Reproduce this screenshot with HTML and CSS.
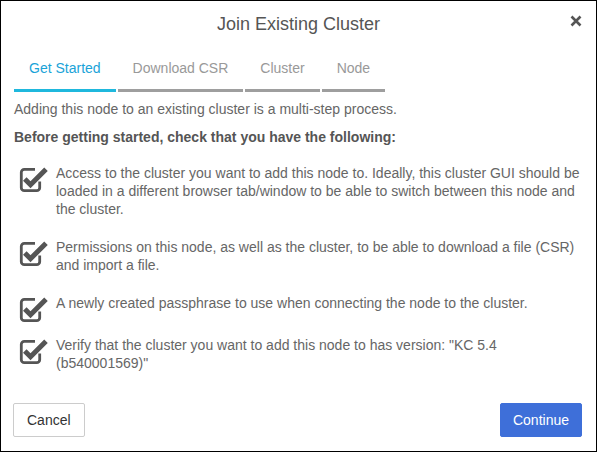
FILE: index.html
```html
<!DOCTYPE html>
<html lang="en">
<head>
<meta charset="utf-8">
<title>Join Existing Cluster</title>
<link rel="stylesheet" href="styles.css">
</head>
<body>
<div class="dialog">
  <header class="dialog-header">
    <span></span>
    <h1 class="dialog-title">Join Existing Cluster</h1>
    <button class="close-btn" aria-label="Close">
      <svg width="12" height="12" viewBox="0 0 12 12"><path d="M1.5 1.5 L10.5 10.5 M10.5 1.5 L1.5 10.5" stroke="#555" stroke-width="2.6" stroke-linecap="butt"/></svg>
    </button>
  </header>

  <nav class="tabs">
    <div class="tab active">Get Started</div>
    <div class="tab">Download CSR</div>
    <div class="tab">Cluster</div>
    <div class="tab">Node</div>
  </nav>

  <main class="dialog-body">
    <p class="intro">Adding this node to an existing cluster is a multi-step process.</p>
    <p class="lead">Before getting started, check that you have the following:</p>
    <ul class="checklist">
      <li class="item">
        <svg class="check" width="31" height="26" viewBox="0 0 31 26"><path d="M17 2.3 H6.3 a3 3 0 0 0 -3 3 V20.7 a3 3 0 0 0 3 3 H18.7 a3 3 0 0 0 3 -3 V14.5" fill="none" stroke="#555" stroke-width="2.8"/><path d="M6.8 12 L12.5 17.7 L28 2.2" fill="none" stroke="#555" stroke-width="5"/></svg>
        <span>Access to the cluster you want to add this node to. Ideally, this cluster GUI should be loaded in a different browser tab/window to be able to switch between this node and the cluster.</span>
      </li>
      <li class="item">
        <svg class="check" width="31" height="26" viewBox="0 0 31 26"><path d="M17 2.3 H6.3 a3 3 0 0 0 -3 3 V20.7 a3 3 0 0 0 3 3 H18.7 a3 3 0 0 0 3 -3 V14.5" fill="none" stroke="#555" stroke-width="2.8"/><path d="M6.8 12 L12.5 17.7 L28 2.2" fill="none" stroke="#555" stroke-width="5"/></svg>
        <span>Permissions on this node, as well as the cluster, to be able to download a file (CSR) and import a file.</span>
      </li>
      <li class="item">
        <svg class="check" width="31" height="26" viewBox="0 0 31 26"><path d="M17 2.3 H6.3 a3 3 0 0 0 -3 3 V20.7 a3 3 0 0 0 3 3 H18.7 a3 3 0 0 0 3 -3 V14.5" fill="none" stroke="#555" stroke-width="2.8"/><path d="M6.8 12 L12.5 17.7 L28 2.2" fill="none" stroke="#555" stroke-width="5"/></svg>
        <span>A newly created passphrase to use when connecting the node to the cluster.</span>
      </li>
      <li class="item">
        <svg class="check" width="31" height="26" viewBox="0 0 31 26"><path d="M17 2.3 H6.3 a3 3 0 0 0 -3 3 V20.7 a3 3 0 0 0 3 3 H18.7 a3 3 0 0 0 3 -3 V14.5" fill="none" stroke="#555" stroke-width="2.8"/><path d="M6.8 12 L12.5 17.7 L28 2.2" fill="none" stroke="#555" stroke-width="5"/></svg>
        <span>Verify that the cluster you want to add this node to has version: "KC 5.4 (b540001569)"</span>
      </li>
    </ul>
  </main>

  <footer class="dialog-footer">
    <button class="btn btn-default">Cancel</button>
    <button class="btn btn-primary">Continue</button>
  </footer>
</div>
</body>
</html>
```

FILE: styles.css
```css
* { box-sizing: border-box; }

html, body {
  margin: 0;
  padding: 0;
  background: #fff;
}

body {
  font-family: "Liberation Sans", Arial, sans-serif;
  font-size: 14px;
  color: #666;
}

.dialog {
  width: 597px;
  height: 452px;
  border: 1px solid #000;
  background: #fff;
  display: flex;
  flex-direction: column;
}

.dialog-header {
  display: grid;
  grid-template-columns: 1fr auto 1fr;
  align-items: center;
  height: 44px;
  padding: 0 14px 0 14px;
}

.dialog-title {
  margin: 0;
  font-size: 18px;
  font-weight: normal;
  color: #555;
  line-height: 22px;
  padding-top: 1px;
}

.close-btn {
  justify-self: end;
  border: 0;
  background: none;
  padding: 0;
  width: 12px;
  height: 12px;
  display: flex;
  margin-top: -4px;
}

.tabs {
  display: flex;
  gap: 2px;
  margin: 15px 13px 0 13px;
}

.tab {
  padding: 0 15px 13px 15px;
  line-height: 16px;
  color: #999;
  border-bottom: 3px solid #9e9e9e;
}

.tab.active {
  color: #1aa3d8;
  border-bottom-color: #1fb8dd;
}

.dialog-body {
  flex: 1;
  padding: 0 13px;
}

.intro {
  margin: 9px 0 0 0;
  line-height: 17px;
  color: #666;
}

.lead {
  margin: 11px 0 0 0;
  line-height: 17px;
  font-weight: bold;
  color: #555;
}

.checklist {
  list-style: none;
  margin: 18px 0 0 0;
  padding: 0;
}

.item {
  display: flex;
  gap: 7px;
  align-items: flex-start;
  line-height: 18px;
  color: #666;
  margin-bottom: 20px;
}

.item .check {
  flex: none;
  margin-left: 4px;
  margin-top: 3px;
  margin-bottom: -7px;
}

.item span {
  flex: 1;
  padding-right: 3px;
}

.dialog-footer {
  display: flex;
  justify-content: space-between;
  padding: 0 14px 14px 12px;
}

.btn {
  font-family: "Liberation Sans", Arial, sans-serif;
  font-size: 14px;
  height: 34px;
  padding: 0 12px;
  border-radius: 2px;
  cursor: pointer;
}

.btn-default {
  background: #fff;
  color: #333;
  border: 1px solid #ccc;
  padding: 0 13px;
}

.btn-primary {
  background: #3e6fd9;
  color: #fff;
  border: 1px solid #3e6fd9;
}
```
